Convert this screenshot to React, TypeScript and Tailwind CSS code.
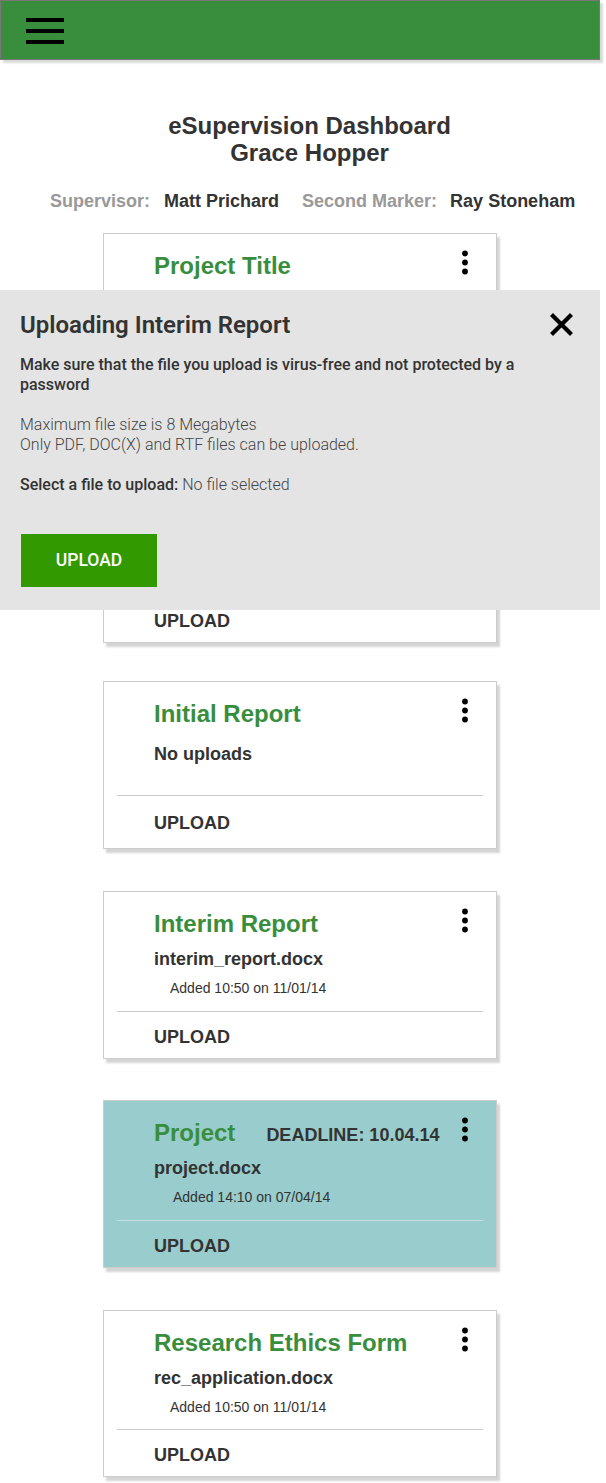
import React from "react";

const ARIAL = { fontFamily: '"Liberation Sans", Arial, sans-serif' };

function Dots() {
  return (
    <svg width="8" height="26" viewBox="0 0 8 26" className="shrink-0 mt-[-1px]">
      <circle cx="4" cy="3.5" r="2.9" fill="#000" />
      <circle cx="4" cy="12.5" r="2.9" fill="#000" />
      <circle cx="4" cy="21.5" r="2.9" fill="#000" />
    </svg>
  );
}

type CardProps = {
  title: string;
  deadline?: string;
  highlight?: boolean;
  file?: string;
  added?: string;
  addedIndent?: string;
  noUploads?: boolean;
  className?: string;
  footerPt?: string;
  footerPb?: string;
  spacer?: boolean;
};

function Card({ title, deadline, highlight, file, added, addedIndent, noUploads, className, footerPt, footerPb, spacer }: CardProps) {
  return (
    <div
      className={`mx-auto w-[394px] border border-[#cccccc] flex flex-col shadow-[3px_4px_2px_rgba(0,0,0,0.17)] ${
        highlight ? "bg-[#99cccc]" : "bg-white"
      } ${className ?? ""}`}
    >
      <div className="pt-[17px] pl-[50px] pr-[27px] flex-1 flex flex-col">
        <div className="flex items-start justify-between h-[29px]">
          <div className="flex items-baseline">
            <span className="text-[24px] leading-[29px] font-bold text-[#388e3c]">{title}</span>
            {deadline && (
              <span className="ml-[31px] text-[18px] leading-[29px] font-bold text-[#333333]">{deadline}</span>
            )}
          </div>
          <Dots />
        </div>
        {noUploads && (
          <div className="mt-[15px] text-[18px] leading-[22px] font-bold text-[#333333]">No uploads</div>
        )}
        {file && (
          <div className="mt-[10px] text-[18px] leading-[22px] font-bold text-[#333333]">{file}</div>
        )}
        {added && (
          <div className={`mt-[10px] text-[14px] leading-[17px] text-[#333333] ${addedIndent ?? "ml-[16px]"}`}>
            {added}
          </div>
        )}
        {spacer && <div className="h-[313px]" />}
      </div>
      <div className={`mx-[13px] h-px ${highlight ? "bg-[#c4dfdf]" : "bg-[#cccccc]"}`} />
      <div
        className={`${footerPt ?? "pt-[14px]"} ${footerPb ?? "pb-[10px]"} pl-[50px] text-[18px] leading-[22px] font-bold text-[#333333]`}
      >
        UPLOAD
      </div>
    </div>
  );
}

export default function App() {
  return (
    <div className="relative w-[606px] min-h-[1483px] bg-white" style={ARIAL}>
      <div className="w-[600px]">
        {/* Header */}
        <header className="h-[60px] bg-[#388e3c] border border-[#777777] flex items-center pl-[25px] shadow-[3px_3px_2px_rgba(0,0,0,0.15)]">
          <div className="flex flex-col gap-[7px] mt-[1px]">
            <div className="w-[38px] h-[4px] bg-black" />
            <div className="w-[38px] h-[4px] bg-black" />
            <div className="w-[38px] h-[4px] bg-black" />
          </div>
        </header>

        {/* Title */}
        <div className="mt-[52px] pl-[19px] text-center text-[24px] leading-[27px] font-bold text-[#333333]">
          <div>eSupervision Dashboard</div>
          <div>Grace Hopper</div>
        </div>

        <div className="mt-[24px] flex items-baseline pl-[50px] text-[18px] leading-[22px] font-bold">
          <span className="text-[#999999]">Supervisor:</span>
          <span className="ml-[14px] text-[#333333]">Matt Prichard</span>
          <span className="ml-[23px] text-[#999999]">Second Marker:</span>
          <span className="ml-[13px] text-[#333333]">Ray Stoneham</span>
        </div>

        {/* Cards */}
        <Card title="Project Title" className="mt-[21px] h-[410px]" spacer />
        <Card
          title="Initial Report"
          noUploads
          className="mt-[38px] h-[168px]"
          footerPt="pt-[16px]"
          footerPb="pb-[14px]"
        />
        <Card
          title="Interim Report"
          file="interim_report.docx"
          added="Added 10:50 on 11/01/14"
          className="mt-[42px] h-[168px]"
        />
        <Card
          title="Project"
          deadline="DEADLINE: 10.04.14"
          highlight
          file="project.docx"
          added="Added 14:10 on 07/04/14"
          addedIndent="ml-[19px]"
          className="mt-[41px] h-[168px]"
        />
        <Card
          title="Research Ethics Form"
          file="rec_application.docx"
          added="Added 10:50 on 11/01/14"
          className="mt-[42px] h-[167px]"
        />
      </div>

      {/* Upload modal */}
      <div
        className="absolute left-0 top-[290px] w-[600px] h-[320px] bg-[#e4e4e4] pl-[20px] pt-[21px] text-[#333333]"
        style={{ fontFamily: 'Roboto, "Noto Sans", sans-serif' }}
      >
        <div className="flex items-start justify-between pr-[27px]">
          <div className="text-[24px] leading-[28px] font-semibold">Uploading Interim Report</div>
          <svg width="23" height="23" viewBox="0 0 23 23" className="mt-[2px]">
            <path d="M3 3 L20 20 M20 3 L3 20" stroke="#000" strokeWidth="4.2" strokeLinecap="square" />
          </svg>
        </div>
        <div className="mt-[16px] w-[540px] text-[16px] leading-[20px] font-medium">
          Make sure that the file you upload is virus-free and not protected by a password
        </div>
        <div className="mt-[20px] text-[16px] leading-[20px] font-light text-[#444444]">
          <div>Maximum file size is 8 Megabytes</div>
          <div>Only PDF, DOC(X) and RTF files can be uploaded.</div>
        </div>
        <div className="mt-[20px] text-[16px] leading-[20px]">
          <span className="font-medium">Select a file to upload:</span>{" "}
          <span className="font-light text-[#444444]">No file selected</span>
        </div>
        <button className="mt-[39px] ml-[1px] w-[136px] h-[53px] bg-[#339900] text-white text-[17.5px] font-medium flex items-center justify-center">
          UPLOAD
        </button>
      </div>
    </div>
  );
}
